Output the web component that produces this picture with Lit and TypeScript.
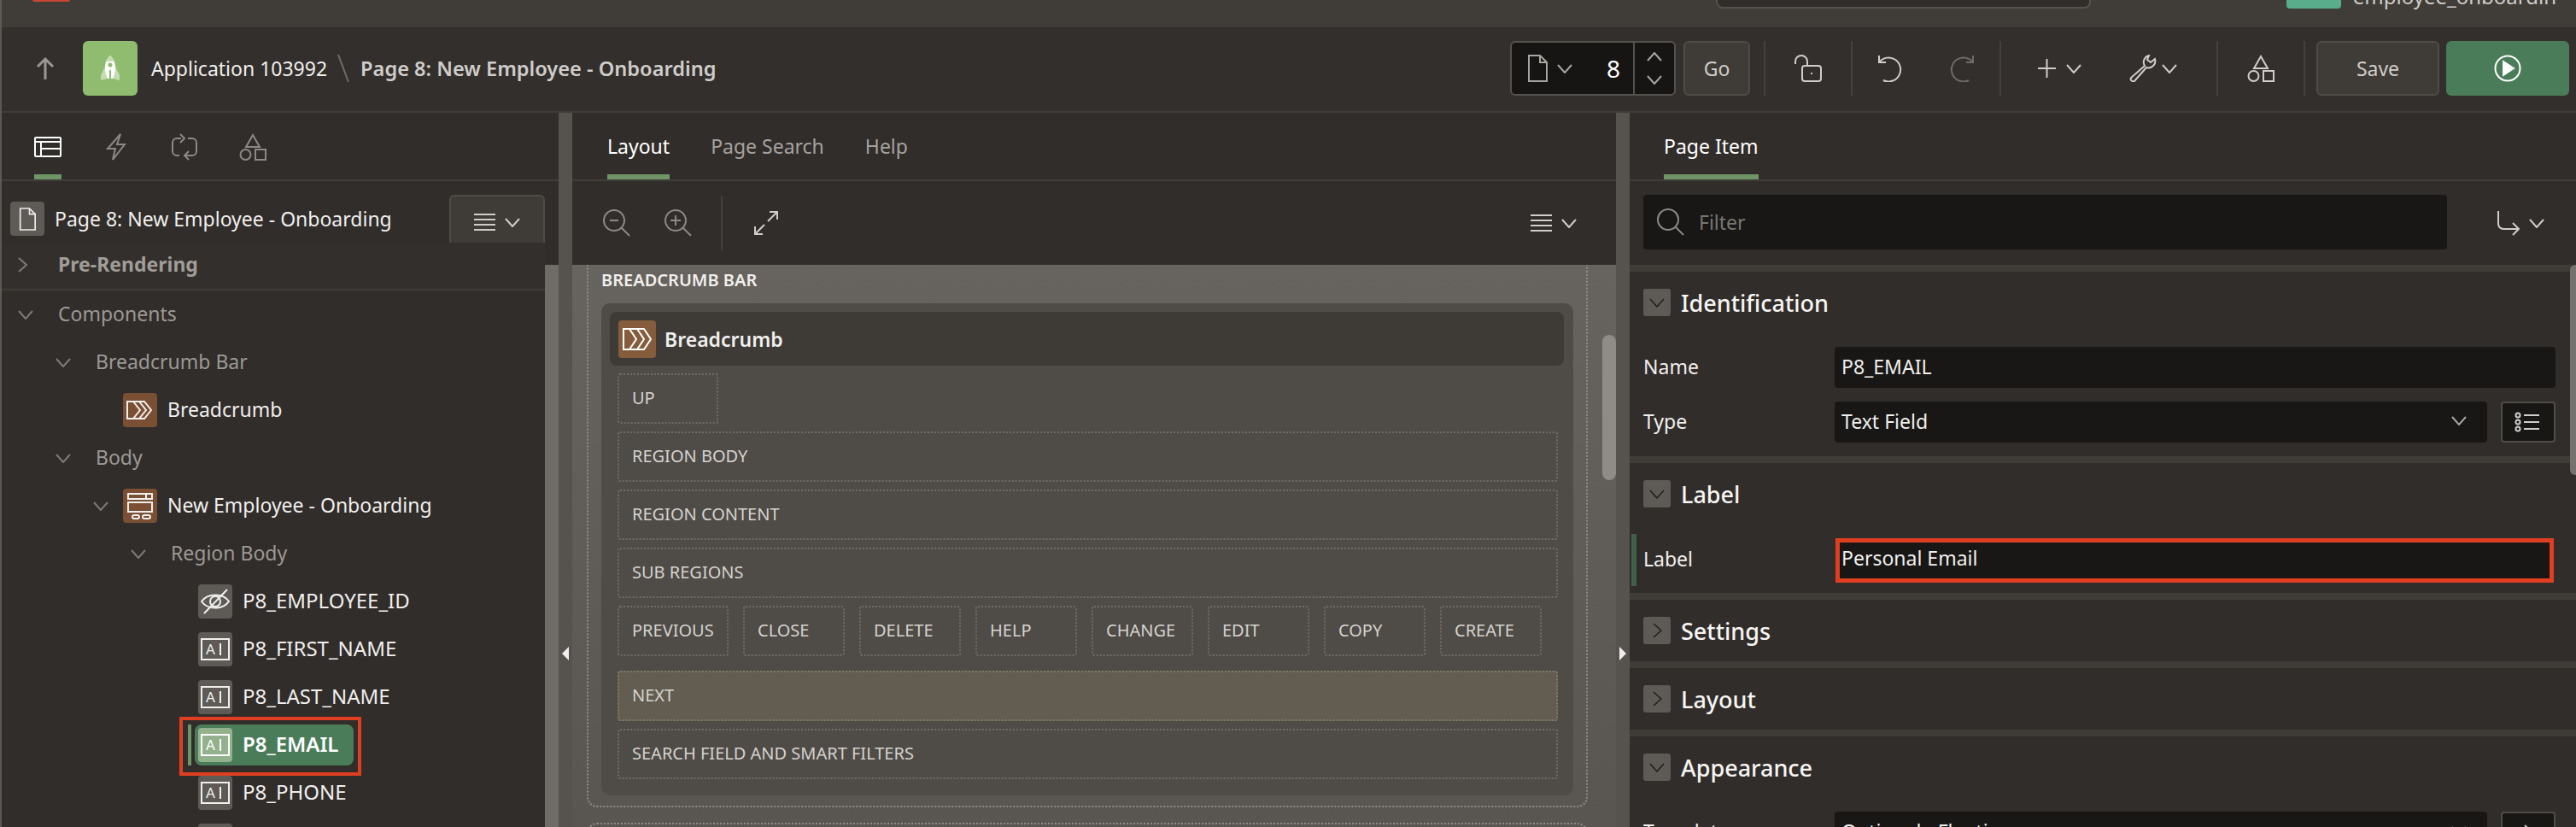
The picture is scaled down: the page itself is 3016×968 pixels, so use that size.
import { LitElement, html, svg, css } from 'lit';
import { customElement } from 'lit/decorators.js';

// small svg helpers, everything is stroked with currentColor
const chev = (dir: 'up' | 'down' | 'right') => {
  const d = dir === 'down' ? 'M1 1l8 9 8-9' : dir === 'up' ? 'M1 10l8-9 8 9' : 'M1 1l9 8-9 8';
  const box = dir === 'right' ? '0 0 11 18' : '0 0 18 11';
  const w = dir === 'right' ? 11 : 18;
  const h = dir === 'right' ? 18 : 11;
  return html`<svg class="ic" width=${w} height=${h} viewBox=${box}><path d=${d} /></svg>`;
};

const shapes = () => html`<svg class="ic" width="32" height="32" viewBox="0 0 32 32">
  <path d="M16 2l8 14H8z" /><circle cx="7.5" cy="25" r="6" /><rect x="19" y="19" width="12" height="12" />
</svg>`;

const doc = (w = 24, h = 32) => html`<svg class="ic" width=${w} height=${h} viewBox="0 0 24 32">
  <path d="M2 1h13l8 8v22H2zM15 1v8h8" />
</svg>`;

const burger = () => html`<span class="burger">
  <svg class="ic" width="25" height="22" viewBox="0 0 25 22"><path d="M0 2h25M0 8h25M0 14h25M0 20h25" /></svg>
  ${chev('down')}
</span>`;

const lens = (mark = '') => html`<svg class="ic" width="32" height="32" viewBox="0 0 32 32">
  <circle cx="13" cy="13" r="12" /><path d="M22 22l9 9" />
  ${mark === 'minus' ? svg`<path d="M8 13h10" />` : ''}
  ${mark === 'plus' ? svg`<path d="M7 13h12M13 7v12" />` : ''}
</svg>`;

const textFieldIcon = () => html`<svg class="ic" width="40" height="40" viewBox="0 0 40 40">
  <rect x="4" y="8" width="32" height="24" />
  <text x="9" y="26" class="glyph">A</text>
  <path d="M26 13v14" />
</svg>`;

const treeIcons: Record<string, () => unknown> = {
  crumb: () => html`<svg class="ic" width="40" height="40" viewBox="0 0 40 40">
    <path d="M5 10h20l8 10-8 10H5zM12 10l8 10-8 10M19 10l8 10-8 10" />
  </svg>`,
  region: () => html`<svg class="ic" width="40" height="40" viewBox="0 0 40 40">
    <rect x="6" y="6" width="28" height="6" /><path d="M27 6v6" />
    <rect x="6" y="16" width="28" height="11" />
    <rect x="11" y="31" width="8" height="4" rx="2" /><rect x="23" y="31" width="9" height="4" rx="2" />
  </svg>`,
  eye: () => html`<svg class="ic" width="40" height="40" viewBox="0 0 40 40">
    <path d="M4 20c7-10 25-10 32 0-7 10-25 10-32 0z" /><circle cx="20" cy="20" r="6" /><path d="M7 34L34 6" />
  </svg>`,
  field: textFieldIcon,
};

interface TreeRow {
  label: string;
  level: number;
  open?: 'down' | 'right';
  icon?: string;
  kind: 'head' | 'group' | 'node' | 'item' | 'selected';
}

const TREE: TreeRow[] = [
  { label: 'Pre-Rendering', level: 0, open: 'right', kind: 'head' },
  { label: 'Components', level: 0, open: 'down', kind: 'group' },
  { label: 'Breadcrumb Bar', level: 1, open: 'down', kind: 'group' },
  { label: 'Breadcrumb', level: 2, icon: 'crumb', kind: 'node' },
  { label: 'Body', level: 1, open: 'down', kind: 'group' },
  { label: 'New Employee - Onboarding', level: 2, open: 'down', icon: 'region', kind: 'node' },
  { label: 'Region Body', level: 3, open: 'down', kind: 'group' },
  { label: 'P8_EMPLOYEE_ID', level: 4, icon: 'eye', kind: 'item' },
  { label: 'P8_FIRST_NAME', level: 4, icon: 'field', kind: 'item' },
  { label: 'P8_LAST_NAME', level: 4, icon: 'field', kind: 'item' },
  { label: 'P8_EMAIL', level: 4, icon: 'field', kind: 'selected' },
  { label: 'P8_PHONE', level: 4, icon: 'field', kind: 'item' },
  { label: '', level: 4, icon: 'field', kind: 'item' },
];

const BUTTON_SLOTS = ['PREVIOUS', 'CLOSE', 'DELETE', 'HELP', 'CHANGE', 'EDIT', 'COPY', 'CREATE'];

@customElement('app-root')
export class AppRoot extends LitElement {
  static styles = css`
    :host {
      display: block;
      width: 3016px;
      height: 968px;
      overflow: hidden;
      background: #312d2a;
      font-family: 'Noto Sans', sans-serif;
      font-size: 23px;
      color: #f0efed;
      box-sizing: border-box;
      border-left: 2px solid #5c5955;
    }
    * { box-sizing: border-box; }
    .ic { fill: none; stroke: currentColor; stroke-width: 2; flex: none; display: block; }
    .glyph { font-family: 'Noto Sans', sans-serif; font-size: 17px; fill: currentColor; stroke: none; }

    /* strip above the builder */
    .top { height: 32px; background: #403d38; display: flex; overflow: hidden; }
    .red { width: 44px; height: 2px; margin-left: 36px; background: #c74634; border-radius: 0 0 10px 10px; }
    .search { width: 439px; height: 10px; margin-left: auto; background: #312d2a; border: 2px solid #55524e; border-top: 0; border-radius: 0 0 8px 8px; }
    .avatar { width: 64px; height: 10px; margin-left: 229px; background: #5aad8a; border-radius: 0 0 4px 4px; }
    .user { margin: -20px 23px 0 14px; line-height: 32px; height: 32px; font-size: 24px; color: #cfcdc9; }

    /* page header */
    .head { height: 100px; display: flex; align-items: center; padding: 0 8px 2px 0; border-bottom: 2px solid #403d38; background: #332f2c; }
    .back { margin-left: 39px; color: #9a9794; }
    .back .ic { stroke-width: 3; }
    .app { width: 64px; height: 64px; margin-left: 32px; background: #8fbc6f; border-radius: 6px; display: flex; align-items: center; justify-content: center; }
    .app-name { margin-left: 16px; }
    .slash { margin: 0 13px 0 12px; color: #6f6c68; }
    .page-name { font-size: 23.6px; font-weight: 600; color: #cfcdca; }
    .tools { margin-left: auto; display: flex; align-items: center; height: 64px; color: #cfcdc9; }
    .picker { width: 194px; height: 64px; display: flex; align-items: center; background: #161513; border: 2px solid #55524e; border-radius: 6px; }
    .picker .doc { margin-left: 18px; color: #a8a5a1; }
    .picker .dn { margin-left: 11px; color: #a8a5a1; }
    .picker .num { margin-left: 32px; width: 32px; text-align: center; color: #fff; font-size: 28px; }
    .stepper { margin-left: auto; width: 48px; height: 100%; border-left: 2px solid #55524e; display: flex; flex-direction: column; align-items: center; justify-content: center; gap: 16px; color: #a8a5a1; }
    .btn { height: 64px; display: flex; align-items: center; justify-content: center; background: #3f3c37; border: 2px solid #4f4c47; border-radius: 6px; color: #cfcdc9; }
    .go { width: 78px; margin-left: 9px; }
    .sep { width: 2px; height: 64px; background: #45423e; flex: none; }
    .sep-first { margin-left: 16px; }
    .tool { display: flex; align-items: center; justify-content: center; height: 64px; }
    .t-lock { width: 100px; }
    .t-undo { width: 86px; }
    .t-redo { width: 86px; color: #6f6c68; }
    .t-add { padding-left: 43px; gap: 12px; }
    .t-wrench { padding-left: 55px; gap: 6px; padding-right: 46px; }
    .t-shapes { width: 100px; }
    .save { width: 144px; margin-left: 13px; }
    .run { width: 144px; height: 64px; margin-left: 8px; background: #4a7c59; border-radius: 6px; display: flex; align-items: center; justify-content: center; color: #fff; }

    /* three panes */
    .panes { display: grid; grid-template-columns: 652px 16px 1222px 16px 1fr; height: 836px; }
    .pane { position: relative; overflow: hidden; display: flex; flex-direction: column; }
    .split { position: relative; background: #56524e; }
    .tri { position: absolute; top: 625px; width: 0; height: 0; border-top: 8px solid transparent; border-bottom: 8px solid transparent; }
    .tri-l { left: 4px; border-right: 8px solid #f0efed; }
    .tri-r { left: 4px; border-left: 8px solid #f0efed; }
    .tabs { height: 80px; flex: none; display: flex; gap: 48px; border-bottom: 2px solid #403d38; }
    .tabs-left { padding-left: 38px; }
    .tabs-mid { padding-left: 41px; }
    .tabs-right { padding-left: 40px; }
    .tab { display: flex; align-items: center; padding-top: 6px; height: 78px; border-bottom: 6px solid transparent; color: #a5a29e; }
    .tab.on { border-bottom-color: #6f9467; color: #fff; }
    .tab-icon { width: 32px; justify-content: center; color: #8c8986; padding-top: 8px; }
    .tab-icon.on { color: #fff; }

    /* tree */
    .tree-bar { height: 98px; flex: none; display: flex; align-items: flex-start; padding: 16px 16px 0 10px; position: relative; z-index: 1; }
    .doc-box { width: 40px; height: 40px; margin-top: 8px; background: #5e5b57; border-radius: 4px; display: flex; align-items: center; justify-content: center; color: #eee; }
    .tree-title { margin: 8px 0 0 12px; line-height: 40px; }
    .menu { width: 112px; margin-left: auto; }
    .burger { display: flex; align-items: center; gap: 11px; color: #cfcdc9; }
    .tree-body { flex: 1; display: flex; min-height: 0; }
    .tree { flex: 1; margin-top: -26px; position: relative; z-index: 2; }
    .strip { width: 16px; background: #6f6c68; flex: none; }
    .row { position: relative; height: 56px; display: flex; align-items: center; }
    .twisty { width: 35px; flex: none; color: #7e7b77; display: flex; }
    .row .label { margin-left: 12px; position: relative; padding-bottom: 2px; }
    .row.head .label { color: #a09d99; font-weight: 700; }
    .row.group .label { color: #9c9995; }
    .row.node .label { color: #f0efed; }
    .row.item .label { color: #f0efed; font-size: 24px; padding-bottom: 4px; }
    .row.selected .label { color: #fff; font-weight: 600; font-size: 24px; padding-bottom: 4px; }
    .t-icon { width: 40px; height: 40px; border-radius: 4px; flex: none; position: relative; background: #5e5b57; color: #f0efed; }
    .t-icon.crumb, .t-icon.region { background: #7a4f34; }
    .row.selected .t-icon { background: #93b18c; color: #fff; }
    .sel-pill { position: absolute; left: 226px; top: 4px; width: 186px; height: 48px; background: #4a7c59; border-radius: 8px; }
    .sel-bar { position: absolute; left: 218px; top: 4px; width: 4px; height: 48px; background: #6f9467; }
    .sel-mark { position: absolute; left: 208px; top: -5px; width: 213px; height: 69px; border: 4px solid #e03e20; }

    /* layout canvas */
    .bar { height: 98px; flex: none; display: flex; align-items: center; position: relative; }
    .filter-bar { align-items: flex-start; }
    .mid-bar { color: #8c8986; }
    .zoom-in { margin-left: 40px; }
    .mid-sep { width: 2px; height: 64px; background: #45423e; margin: 0 37px 0 34px; }
    .mid-bar .expand { color: #cfcdc9; }
    .mid-bar .menu-end { margin-left: auto; margin-right: 46px; }
    .zoom-out { margin-left: 36px; }
    .canvas { flex: 1; position: relative; overflow: hidden; background: linear-gradient(#67635e, #595651); padding: 0 33px 0 17px; }
    .outer { margin-top: -20px; border: 2px dotted #8f8c88; border-radius: 12px; padding: 20px 15px 12px 15px; height: 655px; }
    .outer-next { margin-top: 18px; height: 100px; }
    .outer-title { height: 43px; line-height: 32px; font-size: 20px; font-weight: 600; }
    .reg { background: #4f4b47; border-radius: 10px; padding: 10px 11px 19px 10px; height: 576px; }
    .reg-head { height: 63px; background: #3e3b36; border-radius: 8px; display: flex; align-items: center; padding-left: 10px; font-weight: 600; font-size: 23px; }
    .reg-icon { width: 44px; height: 44px; background: #855d3d; border-radius: 4px; margin-right: 10px; color: #fff; display: flex; align-items: center; justify-content: center; }
    .slots { display: flex; flex-direction: column; gap: 9px; padding: 9px 7px 0 9px; }
    .slot { height: 59px; display: flex; align-items: center; padding: 0 0 2px 15px; font-size: 20px; color: #d5d3cf; border: 2px dotted #6f6c68; border-radius: 3px; }
    .slot.slot-up { width: 118px; }
    .slot.small { width: 119px; }
    .slot.prev { width: 130px; }
    .slot.next { margin-top: 8px; background: #625d50; border-color: #7d7a68; }
    .slot-row { display: flex; gap: 17px; }
    .thumb { position: absolute; right: 0; top: 82px; width: 16px; height: 170px; background: #8f8c88; border-radius: 8px; }

    /* property editor */
    .filter { width: 941px; height: 64px; margin: 16px 0 0 16px; background: #181715; border-radius: 4px; display: flex; align-items: center; padding-left: 16px; color: #8c8986; }
    .filter span { margin-left: 17px; color: #7a7773; }
    .goto { display: flex; align-items: center; gap: 11px; margin: 35px 0 0 58px; color: #cfcdc9; }
    .sec { border-top: 8px solid #3f3c38; padding: 20px 24px 20px 16px; position: relative; }
    .sec-open { padding-bottom: 16px; }
    .sec-head { display: flex; align-items: center; height: 32px; font-size: 27px; font-weight: 500; color: #f6f5f3; }
    .toggle { width: 32px; height: 32px; margin-right: 12px; background: #5e5b57; border-radius: 3px; display: flex; align-items: center; justify-content: center; color: #1f1d1b; }
    .toggle .ic { stroke-width: 1.5; }
    .fields { display: flex; flex-direction: column; gap: 16px; margin-top: 36px; }
    .prop { display: flex; align-items: center; height: 48px; }
    .prop-label { width: 224px; flex: none; padding-bottom: 3px; }
    .input { flex: 1; height: 48px; background: #181715; border-radius: 4px; display: flex; align-items: center; padding: 0 24px 3px 8px; }
    .input .ic { margin-left: auto; color: #a8a5a1; }
    .pick { width: 64px; height: 48px; margin-left: 16px; flex: none; background: #181715; border: 2px solid #4f4c47; border-radius: 4px; display: flex; align-items: center; justify-content: center; color: #cfcdc9; }
    .sec-label { padding-bottom: 8px; }
    .prop-marked { height: 61px; margin-top: 31px; position: relative; }
    .prop-marked::before { content: ''; position: absolute; left: -14px; top: 0; width: 6px; height: 61px; background: #40604a; }
    .marked { flex: none; width: 841px; height: 52px; margin-left: 1px; background: #181715; border: 5px solid #e03e20; display: flex; align-items: center; padding: 0 0 5px 2px; }
    .right-thumb { position: absolute; right: 0; top: 178px; width: 7px; height: 246px; background: #75726e; border-radius: 6px 0 0 6px; z-index: 3; }
  `;

  renderRow(r: TreeRow) {
    const icon = r.icon ? treeIcons[r.icon] : null;
    return html`<div class="row ${r.kind}" style="padding-left:${19 + r.level * 44}px">
      ${r.kind === 'selected' ? html`<div class="sel-bar"></div><div class="sel-pill"></div>` : ''}
      <span class="twisty">${r.open ? chev(r.open) : ''}</span>
      ${icon ? html`<span class="t-icon ${r.icon}">${icon()}</span>` : ''}
      ${r.label ? html`<span class="label">${r.label}</span>` : ''}
      ${r.kind === 'selected' ? html`<div class="sel-mark"></div>` : ''}
    </div>`;
  }

  renderHeader() {
    return html`<div class="head">
      <span class="back"><svg class="ic" width="24" height="28" viewBox="0 0 24 28"><path d="M12 27V3M3 12l9-9 9 9" /></svg></span>
      <span class="app">
        <svg width="24" height="32" viewBox="0 0 24 32">
          <path fill="#c4dcb0" d="M6 14L1 24v6l8-2zM18 14l5 10v6l-8-2z" />
          <path fill="#fff" d="M12 1C7.500 5 5.500 11 6 17c.3 4 1.500 8 3 11h6c1.500-3 2.700-7 3-11 .5-6-1.500-12-6-16z" />
          <path fill="#c4dcb0" d="M12 1C9.500 3 7.700 5.500 6.800 8h10.400C16.300 5.500 14.500 3 12 1z" />
          <circle cx="12" cy="12" r="2.500" fill="#8fbc6f" />
          <path stroke="#8fbc6f" stroke-width="2" d="M12 18v13" />
        </svg>
      </span>
      <span class="app-name">Application 103992</span>
      <svg class="ic slash" width="14" height="32" viewBox="0 0 14 32"><path d="M1 0l12 32" /></svg>
      <span class="page-name">Page 8: New Employee - Onboarding</span>
      <div class="tools">
        <div class="picker">
          <span class="doc">${doc()}</span><span class="dn">${chev('down')}</span>
          <span class="num">8</span>
          <span class="stepper">${chev('up')}${chev('down')}</span>
        </div>
        <div class="btn go">Go</div>
        <div class="sep sep-first"></div>
        <div class="tool t-lock">
          <svg class="ic" width="32" height="32" viewBox="0 0 32 32">
            <rect x="9" y="13" width="22" height="18" rx="3" /><path d="M1 11V8a7 7 0 0 1 14 0v5M20 21v2" />
          </svg>
        </div>
        <div class="sep"></div>
        <div class="tool t-undo">
          <svg class="ic" width="30" height="32" viewBox="0 0 30 32"><path d="M3 9a14 14 0 1 1 5 21M3 1v8h8" /></svg>
        </div>
        <div class="tool t-redo">
          <svg class="ic" width="30" height="32" viewBox="0 0 30 32"><path d="M27 9a14 14 0 1 0-5 21M27 1v8h-8" /></svg>
        </div>
        <div class="sep"></div>
        <div class="tool t-add">
          <svg class="ic" width="21" height="32" viewBox="0 0 21 32"><path d="M10.500 5v22M0 16h21" /></svg>
          ${chev('down')}
        </div>
        <div class="tool t-wrench">
          <svg class="ic" width="33" height="32" viewBox="0 0 33 32">
            <path d="M24 1a8 8 0 0 0-5 12L3 27a3 3 0 0 0 4 4L21 15a8 8 0 0 0 10-10l-5 4-4-3z" />
          </svg>
          ${chev('down')}
        </div>
        <div class="sep"></div>
        <div class="tool t-shapes">${shapes()}</div>
        <div class="sep"></div>
        <div class="btn save">Save</div>
        <div class="run">
          <svg class="ic" width="32" height="32" viewBox="0 0 32 32">
            <circle cx="16" cy="16" r="14.500" /><path fill="currentColor" d="M11 8l12 8-12 8z" />
          </svg>
        </div>
      </div>
    </div>`;
  }

  renderLeft() {
    return html`<section class="pane">
      <div class="tabs tabs-left">
        <div class="tab tab-icon on">
          <svg class="ic" width="32" height="24" viewBox="0 0 32 24"><rect x="1" y="1" width="30" height="22" rx="1" /><path d="M1 6h30M8 6v17M8 14h23" /></svg>
        </div>
        <div class="tab tab-icon">
          <svg class="ic" width="24" height="32" viewBox="0 0 24 32"><path d="M17 1L2 18h9L8 31l14-18h-9z" /></svg>
        </div>
        <div class="tab tab-icon">
          <svg class="ic" width="32" height="32" viewBox="0 0 32 32"><path d="M12 6H7a5 5 0 0 0-5 5v10a5 5 0 0 0 5 5h3M11 1l5 5-5 5M20 6h5a5 5 0 0 1 5 5v10a5 5 0 0 1-5 5h-9M21 21l-5 5 5 5" /></svg>
        </div>
        <div class="tab tab-icon">${shapes()}</div>
      </div>
      <div class="tree-bar">
        <span class="doc-box">${doc(20, 27)}</span>
        <span class="tree-title">Page 8: New Employee - Onboarding</span>
        <div class="btn menu">${burger()}</div>
      </div>
      <div class="tree-body">
        <div class="tree">${TREE.map((r) => this.renderRow(r))}</div>
        <div class="strip"></div>
      </div>
    </section>`;
  }

  renderMiddle() {
    return html`<section class="pane">
      <div class="tabs tabs-mid">
        <div class="tab on">Layout</div>
        <div class="tab">Page Search</div>
        <div class="tab">Help</div>
      </div>
      <div class="bar mid-bar">
        <span class="zoom-out">${lens('minus')}</span>
        <span class="zoom-in">${lens('plus')}</span>
        <span class="mid-sep"></span>
        <svg class="ic expand" width="28" height="28" viewBox="0 0 28 28"><path d="M16 12L27 1M18 1h9v9M12 16L1 27M1 18v9h9" /></svg>
        <span class="menu-end">${burger()}</span>
      </div>
      <div class="canvas">
        <div class="outer">
          <div class="outer-title">BREADCRUMB BAR</div>
          <div class="reg">
            <div class="reg-head">
              <span class="reg-icon">
                <svg class="ic" width="36" height="28" viewBox="0 0 36 28"><path d="M2 2h24l8 12-8 12H2zM9 2l8 12-8 12M18 2l8 12-8 12" /></svg>
              </span>
              Breadcrumb
            </div>
            <div class="slots">
              <div class="slot slot-up">UP</div>
              <div class="slot">REGION BODY</div>
              <div class="slot">REGION CONTENT</div>
              <div class="slot">SUB REGIONS</div>
              <div class="slot-row">
                ${BUTTON_SLOTS.map((s, i) => html`<div class="slot ${i === 0 ? 'prev' : 'small'}">${s}</div>`)}
              </div>
              <div class="slot next">NEXT</div>
              <div class="slot">SEARCH FIELD AND SMART FILTERS</div>
            </div>
          </div>
        </div>
        <div class="outer outer-next"></div>
        <div class="thumb"></div>
      </div>
    </section>`;
  }

  renderRight() {
    return html`<section class="pane">
      <div class="tabs tabs-right"><div class="tab on">Page Item</div></div>
      <div class="bar filter-bar">
        <div class="filter">${lens()}<span>Filter</span></div>
        <div class="goto">
          <svg class="ic" width="27" height="29" viewBox="0 0 27 29"><path d="M2 0v15a6 6 0 0 0 6 6h18M19 14l7 7-7 7" /></svg>
          ${chev('down')}
        </div>
      </div>
      <div class="right-thumb"></div>

      <div class="sec sec-open">
        <div class="sec-head"><span class="toggle">${chev('down')}</span>Identification</div>
        <div class="fields">
          <div class="prop"><span class="prop-label">Name</span><div class="input">P8_EMAIL</div></div>
          <div class="prop">
            <span class="prop-label">Type</span>
            <div class="input">Text Field ${chev('down')}</div>
            <div class="pick">
              <svg class="ic" width="32" height="24" viewBox="0 0 32 24">
                <circle cx="4" cy="4" r="2.500" /><circle cx="4" cy="12" r="2.500" /><circle cx="4" cy="20" r="2.500" />
                <path d="M11 4h18M11 12h18M11 20h18" />
              </svg>
            </div>
          </div>
        </div>
      </div>

      <div class="sec sec-label">
        <div class="sec-head"><span class="toggle">${chev('down')}</span>Label</div>
        <div class="prop prop-marked"><span class="prop-label">Label</span><div class="marked">Personal Email</div></div>
      </div>

      <div class="sec"><div class="sec-head"><span class="toggle">${chev('right')}</span>Settings</div></div>
      <div class="sec"><div class="sec-head"><span class="toggle">${chev('right')}</span>Layout</div></div>

      <div class="sec sec-open">
        <div class="sec-head"><span class="toggle">${chev('down')}</span>Appearance</div>
        <div class="fields">
          <div class="prop">
            <span class="prop-label">Template</span>
            <div class="input">Optional - Floating ${chev('down')}</div>
            <div class="pick">${chev('right')}</div>
          </div>
        </div>
      </div>
    </section>`;
  }

  render() {
    return html`
      <div class="top">
        <div class="red"></div>
        <div class="search"></div>
        <div class="avatar"></div>
        <div class="user">employee_onboardin</div>
      </div>
      ${this.renderHeader()}
      <div class="panes">
        ${this.renderLeft()}
        <div class="split"><span class="tri tri-l"></span></div>
        ${this.renderMiddle()}
        <div class="split"><span class="tri tri-r"></span></div>
        ${this.renderRight()}
      </div>
    `;
  }
}
